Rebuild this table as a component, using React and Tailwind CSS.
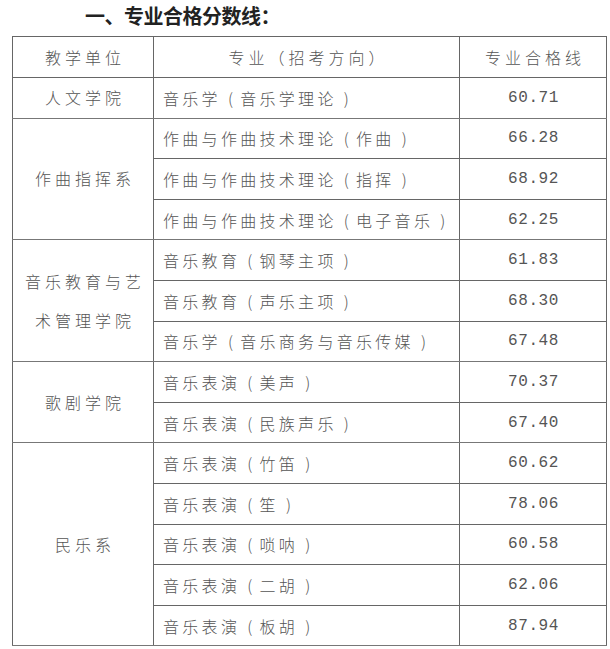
import React from "react";

const groups = [
  { unit: ["人文学院"], rows: [["音乐学（音乐学理论）", "60.71"]] },
  {
    unit: ["作曲指挥系"],
    rows: [
      ["作曲与作曲技术理论（作曲）", "66.28"],
      ["作曲与作曲技术理论（指挥）", "68.92"],
      ["作曲与作曲技术理论（电子音乐）", "62.25"],
    ],
  },
  {
    unit: ["音乐教育与艺", "术管理学院"],
    rows: [
      ["音乐教育（钢琴主项）", "61.83"],
      ["音乐教育（声乐主项）", "68.30"],
      ["音乐学（音乐商务与音乐传媒）", "67.48"],
    ],
  },
  {
    unit: ["歌剧学院"],
    rows: [
      ["音乐表演（美声）", "70.37"],
      ["音乐表演（民族声乐）", "67.40"],
    ],
  },
  {
    unit: ["民乐系"],
    rows: [
      ["音乐表演（竹笛）", "60.62"],
      ["音乐表演（笙）", "78.06"],
      ["音乐表演（唢呐）", "60.58"],
      ["音乐表演（二胡）", "62.06"],
      ["音乐表演（板胡）", "87.94"],
    ],
  },
];

const cjk = { fontFamily: '"Noto Sans CJK SC", sans-serif' };
const mono = { fontFamily: '"Liberation Mono", "Noto Sans CJK SC", monospace' };

export default function App() {
  return (
    <div className="w-[610px] h-[649px] bg-white overflow-hidden" style={cjk}>
      <div className="h-[36px] pl-[85px] pt-[3px] text-[20px] leading-[26px] font-bold text-[#222] tracking-[-0.5px]">
        一、专业合格分数线：
      </div>
      <table className="ml-[12px] w-[594px] table-fixed border-collapse border-[1.5px] border-[#555] text-[16px] font-light text-[#555] tracking-[4px]">
        <colgroup>
          <col className="w-[141px]" />
          <col className="w-[306px]" />
          <col className="w-[147px]" />
        </colgroup>
        <thead>
          <tr className="h-[41px]">
            <th className="border border-[#666] font-light text-center pl-[4px]">教学单位</th>
            <th className="border border-[#666] font-light text-center pl-[4px]">专业（招考方向）</th>
            <th className="border border-[#666] font-light text-center pl-[4px]">专业合格线</th>
          </tr>
        </thead>
        <tbody>
          {groups.map((g) =>
            g.rows.map((r, i) => (
              <tr key={r[0]} className="h-[40.6px]">
                {i === 0 && (
                  <td
                    rowSpan={g.rows.length}
                    className="border border-[#666] border-b-[1.5px] border-b-[#777] text-center align-middle leading-[39px] pl-[4px]"
                  >
                    {g.unit.map((u) => (
                      <div key={u}>{u}</div>
                    ))}
                  </td>
                )}
                <td
                  className={
                    i === g.rows.length - 1
                      ? "border border-[#666] border-b-[1.5px] border-b-[#777] pl-[9px] tracking-[3.3px] whitespace-nowrap"
                      : "border border-[#666] pl-[9px] tracking-[3.3px] whitespace-nowrap"
                  }
                >
                  {r[0].split(/([（）])/).map((p, k) =>
                    p === "（" || p === "）" ? (
                      <span key={k} className="inline-block w-[19.3px] text-center tracking-normal">
                        {p === "（" ? "(" : ")"}
                      </span>
                    ) : (
                      <span key={k} className="tracking-[3.3px]">{p}</span>
                    )
                  )}
                </td>
                <td
                  className={
                    i === g.rows.length - 1
                      ? "border border-[#666] border-b-[1.5px] border-b-[#777] text-center tracking-[0.6px] pl-[1px]"
                      : "border border-[#666] text-center tracking-[0.6px] pl-[1px]"
                  }
                  style={mono}
                >
                  {r[1]}
                </td>
              </tr>
            ))
          )}
        </tbody>
      </table>
    </div>
  );
}
